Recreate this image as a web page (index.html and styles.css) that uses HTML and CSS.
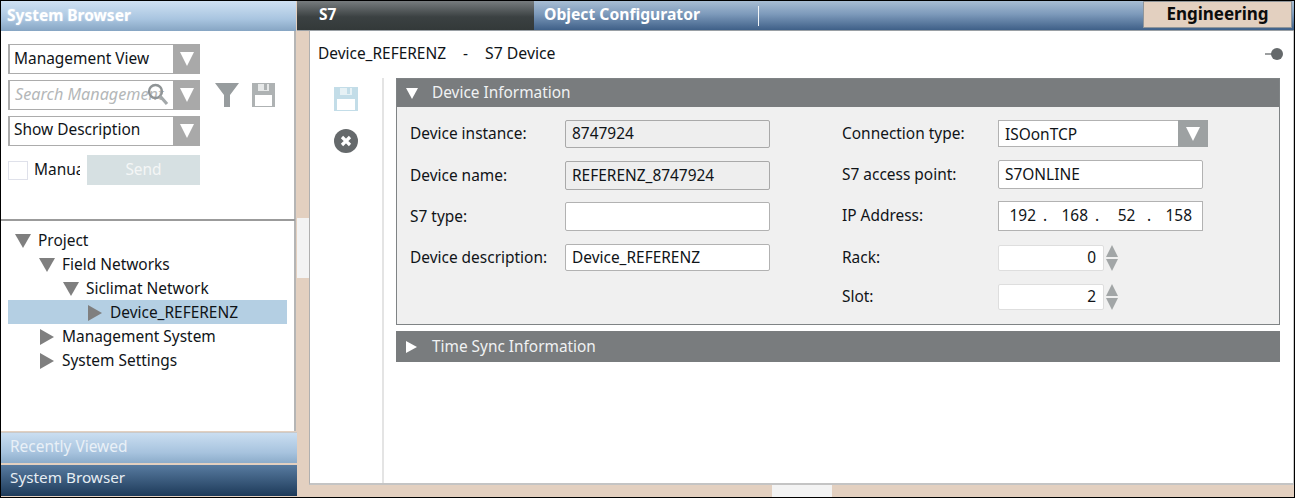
FILE: index.html
```html
<!DOCTYPE html>
<html lang="en">
<head>
<meta charset="utf-8">
<title>System Browser</title>
<link rel="stylesheet" href="styles.css">
</head>
<body>
<div class="app">
  <aside class="side">
    <div class="bar bar-light bar-head"><span class="bar-title">System Browser</span></div>
    <div class="pane">
      <div class="controls">
        <div class="select"><span class="select-text">Management View</span><span class="select-btn"><i class="tri tri-down-w"></i></span></div>
        <div class="search-row">
          <div class="select search">
            <span class="select-text placeholder">Search Management</span>
            <svg class="glass" width="22" height="24" viewBox="0 0 22 24"><circle cx="8.500" cy="8.500" r="6.500" fill="none" stroke="#8f9496" stroke-width="2.400"/><path d="M13 13l7 8" stroke="#a3a8aa" stroke-width="3.200" fill="none"/></svg>
            <span class="select-btn"><i class="tri tri-down-w"></i></span>
          </div>
          <svg class="tool" width="24" height="24" viewBox="0 0 24 24"><path d="M0 0h24L15 12v12H9V12z" fill="#979c9e"/></svg>
          <svg class="tool" width="23" height="24" viewBox="0 0 23 24"><path d="M0 0h23v24H0z" fill="#aeb2b3"/><path d="M6 1h11v7H6z" fill="#e6e8e8"/><path d="M12 1h3v6h-3z" fill="#aeb2b3"/><path d="M3 12h17v11H3z" fill="#fff"/></svg>
        </div>
        <div class="select select-show"><span class="select-text">Show Description</span><span class="select-btn"><i class="tri tri-down-w"></i></span></div>
        <div class="send-row">
          <span class="check"></span>
          <span class="manual">Manual</span>
          <span class="send">Send</span>
        </div>
      </div>
      <ul class="tree">
        <li class="node lvl0"><i class="tri tri-down-g"></i>Project</li>
        <li class="node lvl1"><i class="tri tri-down-g"></i>Field Networks</li>
        <li class="node lvl2"><i class="tri tri-down-g"></i>Siclimat Network</li>
        <li class="node lvl3 selected"><i class="tri tri-right-g"></i>Device_REFERENZ</li>
        <li class="node lvl1"><i class="tri tri-right-g"></i>Management System</li>
        <li class="node lvl1"><i class="tri tri-right-g"></i>System Settings</li>
      </ul>
    </div>
    <div class="bar bar-light bar-recent">Recently Viewed</div>
    <div class="bar bar-dark">System Browser</div>
  </aside>

  <main class="right">
    <header class="top">
      <div class="top-s7">S7</div>
      <div class="top-blue">
        <span class="top-title">Object Configurator</span>
        <span class="top-sep"></span>
        <span class="engineering">Engineering</span>
      </div>
    </header>
    <div class="middle">
      <div class="splitter"><span class="grip-v"></span></div>
      <div class="content">
        <div class="title-row">
          <span class="crumb">Device_REFERENZ</span><span class="dash">-</span><span class="kind">S7 Device</span>
          <svg class="pin" width="18" height="14" viewBox="0 0 18 14"><path d="M0 7h8" stroke="#7b7f81" stroke-width="1.500"/><circle cx="12" cy="7" r="6" fill="#65696b"/></svg>
        </div>
        <div class="work">
          <div class="actions">
            <svg width="24" height="24" viewBox="0 0 24 24"><path d="M0 0h24v24H0z" fill="#c3dde8"/><path d="M6 1h12v7H6z" fill="#e6f1f5"/><path d="M13 1h3v6h-3z" fill="#c3dde8"/><path d="M3 12h18v11H3z" fill="#fff"/></svg>
            <svg width="24" height="24" viewBox="0 0 24 24"><circle cx="12" cy="12" r="12" fill="#65696b"/><path d="M8 8l8 8M16 8l-8 8" stroke="#fff" stroke-width="3.200"/></svg>
          </div>
          <div class="sections">
            <section class="panel">
              <div class="panel-head"><i class="tri tri-down-w small"></i>Device Information</div>
              <div class="panel-body">
                <div class="col col-left">
                  <div class="field"><label class="lab lab-l">Device instance:</label><div class="input ro">8747924</div></div>
                  <div class="field h-29"><label class="lab lab-l">Device name:</label><div class="input ro">REFERENZ_8747924</div></div>
                  <div class="field h-29"><label class="lab lab-l">S7 type:</label><div class="input"></div></div>
                  <div class="field h-27 desc"><label class="lab lab-l">Device description:</label><div class="input">Device_REFERENZ</div></div>
                </div>
                <div class="col col-right">
                  <div class="field h-27"><label class="lab lab-r">Connection type:</label><div class="input conn">ISOonTCP<span class="select-btn"><i class="tri tri-down-w"></i></span></div></div>
                  <div class="field h-29"><label class="lab lab-r">S7 access point:</label><div class="input wide">S7ONLINE</div></div>
                  <div class="field h-30"><label class="lab lab-r">IP Address:</label>
                    <div class="input ip wide"><span>192</span><b>.</b><span>168</span><b>.</b><span>52</span><b>.</b><span>158</span></div>
                  </div>
                  <div class="field h-26"><label class="lab lab-r">Rack:</label><div class="input spin">0</div><div class="spinner"><i class="up"></i><i class="down"></i></div></div>
                  <div class="field h-26"><label class="lab lab-r">Slot:</label><div class="input spin">2</div><div class="spinner"><i class="up"></i><i class="down"></i></div></div>
                </div>
              </div>
            </section>
            <div class="panel-head closed"><i class="tri tri-right-w"></i>Time Sync Information</div>
          </div>
        </div>
      </div>
    </div>
    <div class="bottom"><span class="grip-h"></span></div>
  </main>
</div>
</body>
</html>
```
FILE: styles.css
```css
* { box-sizing: border-box; }
html, body { margin: 0; padding: 0; background: #e3d0c0; }
body { font-family: "Noto Sans", "Open Sans", sans-serif; font-size: 15.450px; color: #101418; }
ul { list-style: none; margin: 0; padding: 0; }

.app { width: 1295px; height: 498px; border: 1px solid #000; display: flex; background: #e3d0c0; overflow: hidden; }

/* left column */
.side { width: 296px; flex: none; display: flex; flex-direction: column; }
.bar { flex: none; display: flex; align-items: center; }
.bar-light { background: linear-gradient(#cfe1f3, #a9c5e0 60%, #86a5c3); color: #fff; }
.bar-head { height: 30px; padding: 0 0 3px 6px; border-right: 1px solid #e3d0c0; }
.bar-title { font-weight: 700; font-size: 15.500px; text-shadow: 0 0 2px rgba(255,255,255,.5); }
.pane { flex: 1; background: #fff; margin-right: 1px; border-right: 2px solid #b5b5b5; display: flex; flex-direction: column; }
.controls { height: 190px; flex: none; padding: 13px 0 0 7px; border-bottom: 2px solid #9b9b9b; margin-right: -1px; }
.select { width: 192px; height: 30px; border: 1px solid #acacac; border-width: 1px 0 1px 1px; display: flex; align-items: center; position: relative; background: #fff; margin-bottom: 6px; box-shadow: inset 1px 0 0 #acacac; }
.select-text { flex: 1; padding: 0 0 3px 5px; white-space: nowrap; overflow: hidden; }
.select-show .select-text { padding-bottom: 5px; }
.select .select-btn { width: 27px; align-self: stretch; margin: -1px 0; }
.select-btn { flex: none; background: #a9a9a9; display: flex; align-items: center; justify-content: center; }
.search-row { display: flex; align-items: flex-start; }
.search { flex: none; }
.placeholder { font-style: italic; color: #b4b7b8; padding-left: 6px; font-size: 16.200px; }
.glass { position: absolute; left: 138px; top: 2px; }
.tool { margin-top: 3px; margin-left: 15px; flex: none; }
.tool + .tool { margin-left: 13px; }
.send-row { display: flex; align-items: center; margin-top: 9px; height: 30px; }
.check { width: 20px; height: 19px; margin-top: 1px; border: 1px solid #dfe1ea; flex: none; }
.manual { width: 46px; margin-left: 6px; overflow: hidden; white-space: nowrap; flex: none; padding-bottom: 3px; }
.send { width: 113px; height: 30px; margin-left: 7px; padding-bottom: 3px; background: #d6e0e2; color: #f4f6f6; display: flex; align-items: center; justify-content: center; flex: none; }

.tree { padding: 7px 7px 0; flex: 1; }
.node { height: 24px; display: flex; align-items: center; white-space: nowrap; padding-top: 1px; padding-bottom: 1px; }
.node .tri { margin-right: 7px; margin-top: 1px; }
.lvl0 { padding-left: 7px; }
.lvl1 { padding-left: 31px; }
.lvl2 { padding-left: 55px; }
.lvl3 { padding-left: 80px; }
.selected { background: #b4cfe3; }

.tri { display: inline-block; width: 0; height: 0; border-style: solid; flex: none; }
.tri-down-g { border-width: 14px 8px 0; border-color: #7f7f7f transparent transparent; }
.tri-right-g { border-width: 8px 0 8px 14px; border-color: transparent transparent transparent #7f7f7f; }
.tree .tri-right-g { margin-left: 1px; margin-right: 8px; }
.lvl3 .tri-right-g { margin-left: 0; }
.tri-down-w { border-width: 14px 7.500px 0; border-color: #fff transparent transparent; }
.tri-down-w.small { border-width: 11px 6px 0; margin-right: 14px; margin-top: 2px; }
.tri-right-w { border-width: 6px 0 6px 11px; border-color: transparent transparent transparent #fff; margin-right: 15px; margin-left: 10px; margin-top: 2px; }

.bar-recent { height: 31px; padding: 0 0 5px 9px; margin-top: 1px; color: #e9f0f7; background: linear-gradient(#cadef1, #a7c3de 65%, #8cacca); border-top: 1px solid #c9c9c9; }
.bar-dark { height: 31px; margin-top: 2px; margin-bottom: 1px; padding: 0 0 7px 9px; font-size: 15.300px; color: #e6edf3; background: linear-gradient(#587ba0, #1d3a59); }

/* right column */
.right { flex: 1; min-width: 0; display: flex; flex-direction: column; }
.top { height: 30px; flex: none; display: flex; border-bottom: 1px solid #9aa0a5; }
.top-s7 { width: 237px; flex: none; padding: 0 0 3px 22px; display: flex; align-items: center; background: linear-gradient(#777c7e, #3b4142 55%, #333939); color: #fff; font-weight: 700; font-size: 15.500px; }
.top-blue { flex: 1; display: flex; align-items: center; background: linear-gradient(#a8bed4, #7d9abb 45%, #3f6088); color: #fff; font-weight: 700; font-size: 15.700px; padding-left: 10px; }
.top-title { width: 214px; flex: none; white-space: nowrap; padding-bottom: 3px; }
.top-sep { width: 1px; height: 20px; background: #f2f5f8; flex: none; }
.engineering { margin-left: auto; margin-right: 2px; align-self: flex-start; width: 149px; height: 27px; padding-bottom: 2px; background: #e3d0c0; border: 1px solid #8f959a; color: #0c0c0c; font-size: 17px; display: flex; align-items: center; justify-content: center; }

.middle { flex: 1; display: flex; min-height: 0; }
.splitter { width: 12px; flex: none; padding-top: 187px; }
.grip-v { display: block; height: 60px; background: #f3f3f3; }
.content { flex: 1; min-width: 0; background: #fff; border-left: 1px solid #b0b0b0; border-bottom: 2px solid #c4c4c4; border-right: 1px solid #c9c9c9; display: flex; flex-direction: column; }
.title-row { height: 47px; flex: none; display: flex; align-items: center; padding: 0 10px 2px 8px; white-space: nowrap; }
.title-row span { padding-bottom: 2px; }
.dash { margin: 0 17px 0 17px; }
.kind { font-size: 15.800px; }
.pin { margin-left: auto; }
.work { flex: 1; display: flex; min-height: 0; }
.actions { width: 74px; flex: none; border-right: 2px solid #e4e4e4; padding: 9px 0 0 24px; display: flex; flex-direction: column; gap: 18px; }
.actions svg { display: block; }
.sections { flex: 1; padding: 0 13px 0 12px; display: flex; flex-direction: column; gap: 6px; }
.panel { border: 1px solid #7f8385; background: #f0f0f0; height: 247px; flex: none; }
.panel-head { height: 28px; background: #797c7e; color: #f0f2f3; font-size: 15.400px; display: flex; align-items: center; padding: 0 0 1px 9px; white-space: nowrap; }
.closed { height: 31px; flex: none; padding-left: 0; }
.panel-body { display: flex; padding: 13px 0 0 13px; }
.col { display: flex; flex-direction: column; }
.col-left { width: 432px; flex: none; }
.col-right { flex: 1; }
.field { display: flex; align-items: center; height: 28px; margin-bottom: 13px; }
.h-29 { height: 29px; margin-bottom: 12px; }
.h-27 { height: 27px; }
.desc { margin-top: 1px; }
.h-30 { height: 30px; margin-bottom: 14px; }
.h-26 { height: 26px; }
.lab { flex: none; white-space: nowrap; padding-bottom: 2px; }
.lab-l { width: 155px; }
.lab-r { width: 156px; }
.input { height: 100%; width: 205px; border: 1px solid #b2b2b2; border-radius: 2px; background: #fff; padding: 0 0 2px 6px; display: flex; align-items: center; white-space: nowrap; }
.ro { background: #eeeeee; border-color: #a9a9a9; }
.conn { width: 210px; border-radius: 0; padding-right: 0; padding-bottom: 0; }
.conn .select-btn { width: 30px; margin: -1px -1px -1px auto; align-self: stretch; background: #9da1a2; }
.wide { width: 205px; }
.ip { padding: 0 0 2px 10.500px; border-radius: 0; }
.ip span { width: 26px; margin-right: 5.500px; text-align: center; flex: none; }
.ip b { font-weight: 400; width: 8px; margin-right: 12.500px; text-align: center; flex: none; }
.spin { width: 106px; justify-content: flex-end; padding: 0 7px 2px 0; border-color: #dedede; }
.spinner { width: 13px; margin-left: 2px; flex: none; display: flex; flex-direction: column; gap: 2px; }
.spinner i { display: block; width: 0; height: 0; border-style: solid; }
.up { border-width: 0 6.500px 12px; border-color: transparent transparent #a2a6a7; }
.down { border-width: 12px 6.500px 0; border-color: #a2a6a7 transparent transparent; }

.bottom { height: 12px; flex: none; display: flex; }
.grip-h { width: 60px; background: #f3f3f3; margin-left: 475px; }
```
